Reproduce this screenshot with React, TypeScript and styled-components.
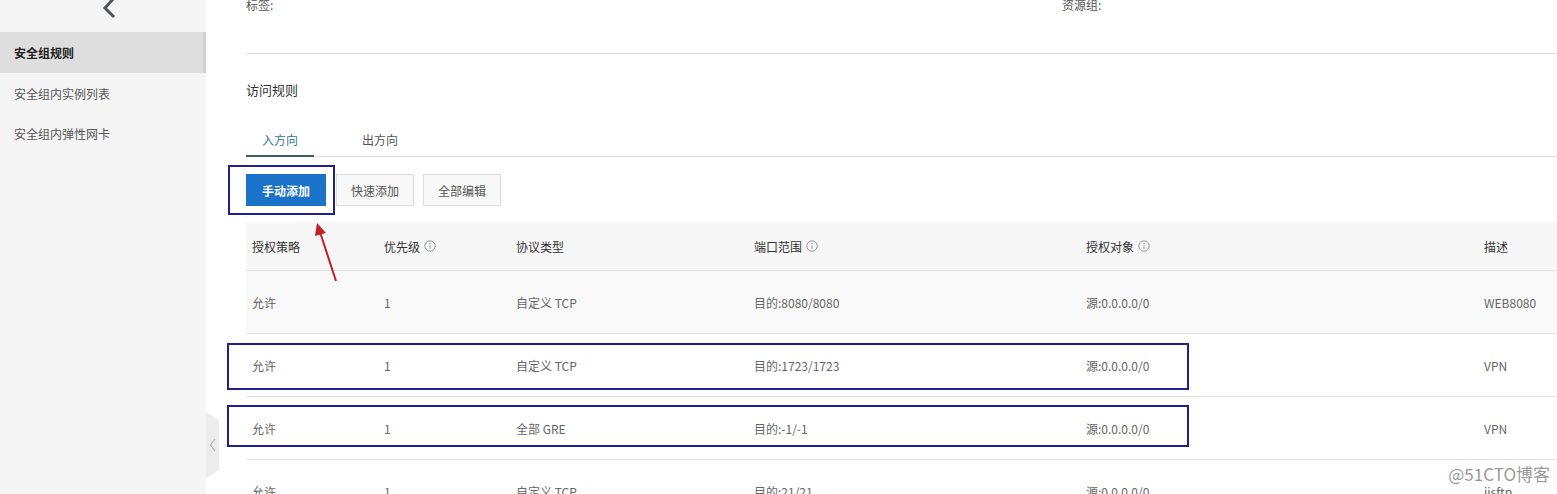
import React from "react";
import styled, { createGlobalStyle } from "styled-components";

const GlobalStyle = createGlobalStyle`
  html, body { margin: 0; padding: 0; background: #fff; }
  body { font-family: "Noto Sans CJK SC", "Noto Sans", "Liberation Sans", sans-serif; font-size: 12px; color: #333; }
  * { box-sizing: border-box; }
`;

const Page = styled.div`
  display: flex;
  width: 1557px;
  height: 494px;
  overflow: hidden;
`;

const Sidebar = styled.aside`
  width: 206px;
  flex: none;
  background: #f5f5f5;
  display: flex;
  flex-direction: column;
  padding-top: 32px;
  position: relative;
`;

const TopChevron = styled.svg`
  position: absolute;
  left: 101px;
  top: -3px;
`;

const NavItem = styled.div<{ $active?: boolean }>`
  flex: none;
  height: ${(p) => (p.$active ? 41 : 40)}px;
  display: flex;
  align-items: center;
  padding-left: 14px;
  font-size: 12px;
  color: ${(p) => (p.$active ? "#222" : "#555")};
  font-weight: ${(p) => (p.$active ? 700 : 400)};
  background: ${(p) => (p.$active ? "#dedede" : "transparent")};
  border-right: ${(p) => (p.$active ? "3px solid #d2d2d2" : "none")};
`;

const Main = styled.main`
  flex: 1;
  min-width: 0;
  position: relative;
  padding-left: 40px;
  display: block;
  overflow: hidden;
`;

const InfoRow = styled.div`
  display: grid;
  grid-template-columns: 816px 1fr;
  margin-top: -4px;
  height: 58px;
  border-bottom: 1px solid #dcdcdc;
  color: #555;
  font-size: 12px;
  line-height: 18px;
`;

const SectionTitle = styled.div`
  padding-top: 27px;
  font-size: 13px;
  line-height: 18px;
  color: #333;
`;

const TabBar = styled.div`
  margin-top: 21px;
  display: flex;
  border-bottom: 1px solid #dcdcdc;
  height: 37px;
`;

const Tab = styled.div<{ $active?: boolean }>`
  height: 37px;
  padding: 3px 16px 0;
  margin-right: 32px;
  display: flex;
  align-items: center;
  font-size: 12px;
  color: ${(p) => (p.$active ? "#3a7396" : "#555")};
  border-bottom: 2px solid ${(p) => (p.$active ? "#3a5d6e" : "transparent")};
  margin-bottom: -1px;
`;

const Toolbar = styled.div`
  margin-top: 17px;
  display: flex;
  gap: 9px;
`;

const Button = styled.button<{ $primary?: boolean }>`
  height: 32px;
  padding: 0 ${(p) => (p.$primary ? 15 : 14)}px;
  font-family: inherit;
  font-size: 12px;
  font-weight: ${(p) => (p.$primary ? 700 : 400)};
  color: ${(p) => (p.$primary ? "#fff" : "#555")};
  background: ${(p) => (p.$primary ? "#1b73c9" : "#f8f8f8")};
  border: 1px solid ${(p) => (p.$primary ? "#1b73c9" : "#dddddd")};
  border-radius: 0;
  margin-right: ${(p) => (p.$primary ? 1 : 0)}px;
`;

const Table = styled.div`
  margin-top: 16px;
`;

const COLS = "132px 132px 238px 332px 398px 1fr";

const HeaderRow = styled.div`
  display: grid;
  grid-template-columns: ${COLS};
  height: 49px;
  align-items: center;
  background: #f7f7f7;
  border-bottom: 1px solid #e2e2e2;
  color: #333;
`;

const Row = styled.div<{ $shaded?: boolean }>`
  display: grid;
  grid-template-columns: ${COLS};
  height: 63px;
  align-items: center;
  background: ${(p) => (p.$shaded ? "#f9f9f9" : "#fff")};
  border-bottom: 1px solid #e2e2e2;
  color: #666;
`;

const Cell = styled.div`
  padding-left: 6px;
  display: flex;
  align-items: center;
  gap: 4px;
  white-space: nowrap;
`;

const Annotation = styled.div`
  position: absolute;
  border: 2px solid #1f1f8e;
`;

const Arrow = styled.svg`
  position: absolute;
  left: 100px;
  top: 218px;
`;

const CollapseTab = styled.div`
  position: absolute;
  left: 0;
  top: 412px;
  width: 13px;
  height: 66px;
  background: #ececec;
  display: flex;
  align-items: center;
  justify-content: center;
  clip-path: polygon(0 0, 100% 12%, 100% 88%, 0 100%);
`;

const Watermark = styled.div`
  position: absolute;
  right: 7px;
  bottom: 11px;
  font-size: 17px;
  line-height: 18px;
  color: #9a9a9a;
  background: rgba(255, 255, 255, 0.6);
`;

const InfoIcon = () => (
  <svg width="12" height="12" viewBox="0 0 12 12">
    <circle cx="6" cy="6" r="5.2" fill="none" stroke="#999" strokeWidth="1" />
    <line x1="6" y1="5.2" x2="6" y2="9" stroke="#999" strokeWidth="1" />
    <circle cx="6" cy="3.4" r="0.7" fill="#999" />
  </svg>
);

const rows = [
  { action: "允许", pri: "1", proto: "自定义 TCP", port: "目的:8080/8080", obj: "源:0.0.0.0/0", desc: "WEB8080", shaded: true },
  { action: "允许", pri: "1", proto: "自定义 TCP", port: "目的:1723/1723", obj: "源:0.0.0.0/0", desc: "VPN" },
  { action: "允许", pri: "1", proto: "全部 GRE", port: "目的:-1/-1", obj: "源:0.0.0.0/0", desc: "VPN" },
  { action: "允许", pri: "1", proto: "自定义 TCP", port: "目的:21/21", obj: "源:0.0.0.0/0", desc: "jisftp" },
];

export default function App() {
  return (
    <>
      <GlobalStyle />
      <Page>
        <Sidebar>
          <TopChevron width="18" height="22" viewBox="0 0 18 22">
            <polyline points="13,1 4,11 13,20" fill="none" stroke="#50545e" strokeWidth="3" strokeLinejoin="miter" />
          </TopChevron>
          <NavItem $active>安全组规则</NavItem>
          <NavItem>安全组内实例列表</NavItem>
          <NavItem>安全组内弹性网卡</NavItem>
        </Sidebar>
        <Main>
          <InfoRow>
            <span>标签:</span>
            <span>资源组:</span>
          </InfoRow>
          <SectionTitle>访问规则</SectionTitle>
          <TabBar>
            <Tab $active>入方向</Tab>
            <Tab>出方向</Tab>
          </TabBar>
          <Toolbar>
            <Button $primary>手动添加</Button>
            <Button>快速添加</Button>
            <Button>全部编辑</Button>
          </Toolbar>
          <Table>
            <HeaderRow>
              <Cell>授权策略</Cell>
              <Cell>优先级 <InfoIcon /></Cell>
              <Cell>协议类型</Cell>
              <Cell>端口范围 <InfoIcon /></Cell>
              <Cell>授权对象 <InfoIcon /></Cell>
              <Cell>描述</Cell>
            </HeaderRow>
            {rows.map((r, i) => (
              <Row key={i} $shaded={r.shaded}>
                <Cell>{r.action}</Cell>
                <Cell>{r.pri}</Cell>
                <Cell>{r.proto}</Cell>
                <Cell>{r.port}</Cell>
                <Cell>{r.obj}</Cell>
                <Cell>{r.desc}</Cell>
              </Row>
            ))}
          </Table>

          <Annotation style={{ left: 22, top: 165, width: 107, height: 50 }} />
          <Annotation style={{ left: 21, top: 343, width: 962, height: 47 }} />
          <Annotation style={{ left: 21, top: 405, width: 962, height: 42 }} />
          <Arrow width="40" height="70" viewBox="0 0 40 70">
            <line x1="30" y1="63" x2="14" y2="14" stroke="#c0202a" strokeWidth="2" />
            <polygon points="11,5 9,18 20,15" fill="#c0202a" />
          </Arrow>
          <CollapseTab>
            <svg width="8" height="14" viewBox="0 0 8 14">
              <polyline points="6,1 1.5,7 6,13" fill="none" stroke="#b5b5b5" strokeWidth="1.2" />
            </svg>
          </CollapseTab>
          <Watermark>@51CTO博客</Watermark>
        </Main>
      </Page>
    </>
  );
}
